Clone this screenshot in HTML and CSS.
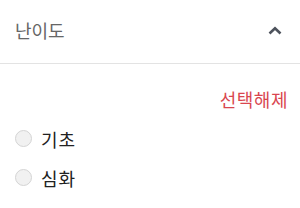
FILE: index.html
```html
<!DOCTYPE html>
<html lang="ko">
<head>
  <meta charset="UTF-8">
  <title>난이도</title>
  <link rel="stylesheet" href="styles.css">
</head>
<body>
  <div class="filter-box">
    <div class="filter-head">
      <span class="filter-title">난이도</span>
      <svg class="chevron" width="14" height="10" viewBox="0 0 14 10">
        <path d="M1.5 8.5 L7 3.2 L12.5 8.5" fill="none" stroke="#4d525c" stroke-width="2.6"/>
      </svg>
    </div>
    <div class="filter-body">
      <div class="clear-row">
        <a href="#" class="clear-link">선택해제</a>
      </div>
      <label class="radio-item">
        <input type="radio" name="level">
        <span class="radio-mark"></span>
        <span>기초</span>
      </label>
      <label class="radio-item">
        <input type="radio" name="level">
        <span class="radio-mark"></span>
        <span>심화</span>
      </label>
    </div>
  </div>
</body>
</html>
```

FILE: styles.css
```css
body {
  margin: 0;
  background: #fff;
  font-family: "Noto Sans CJK KR", "Noto Sans", sans-serif;
}

.filter-box {
  width: 300px;
}

.filter-head {
  display: flex;
  align-items: center;
  justify-content: space-between;
  height: 60px;
  padding: 0 18px 3px 15px;
  border-bottom: 1px solid #e3e3e3;
}

.filter-title {
  font-size: 18px;
  line-height: 24px;
  color: #666;
}

.chevron {
  display: block;
}

.filter-body {
  padding: 23px 12px 0 15px;
}

.clear-row {
  display: flex;
  justify-content: flex-end;
  margin-bottom: 8px;
}

.clear-link {
  font-size: 18px;
  line-height: 24px;
  letter-spacing: 0.5px;
  color: #d9464f;
  text-decoration: none;
}

.radio-item {
  display: flex;
  align-items: center;
  gap: 9px;
  height: 39px;
  font-size: 18px;
  letter-spacing: 1px;
  color: #222;
}

.radio-item input {
  display: none;
}

.radio-mark {
  width: 17px;
  height: 17px;
  border-radius: 50%;
  border: 1px solid #d4d4d4;
  background: #f1f1f1;
  box-sizing: border-box;
}
```
